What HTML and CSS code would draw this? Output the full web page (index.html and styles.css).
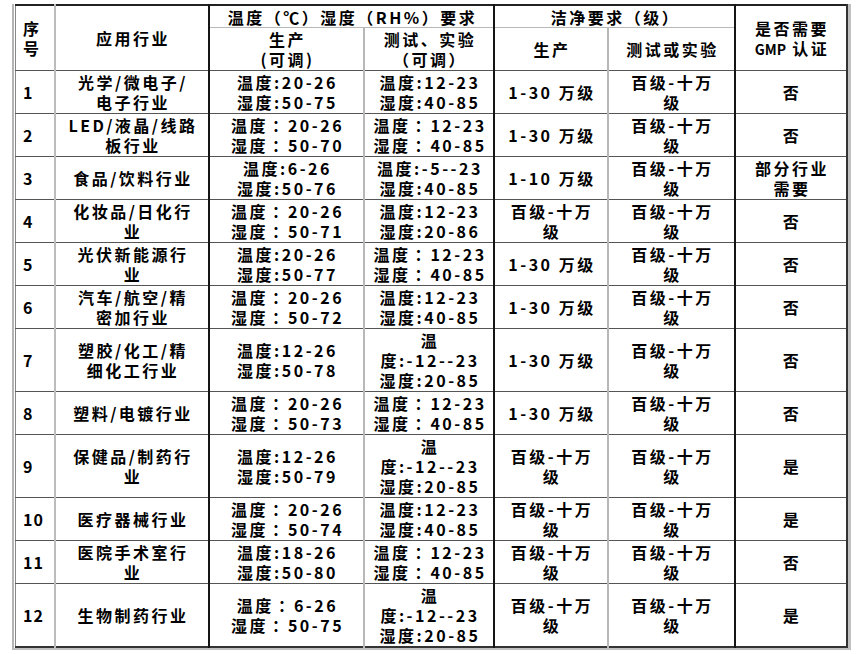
FILE: index.html
```html
<!DOCTYPE html>
<html lang="zh-CN">
<head>
<meta charset="utf-8">
<title>洁净室行业要求</title>
<link rel="stylesheet" href="styles.css">
</head>
<body>
<div class="frame">
<table class="spec">
<colgroup>
<col class="w1"><col class="w2"><col class="w3"><col class="w4"><col class="w5"><col class="w6"><col class="w7">
</colgroup>
<thead>
<tr class="h1">
<th class="c1 num" rowspan="2">序<br>号</th>
<th class="c2" rowspan="2">应用行业</th>
<th class="c4 sub" colspan="2">温度（℃）湿度（RH%）要求</th>
<th class="c6 sub" colspan="2">洁净要求（级）</th>
<th class="c7" rowspan="2">是否需要<br><span class="lat">GMP</span> 认证</th>
</tr>
<tr class="h2">
<th class="c3">生产<br>(可调)</th>
<th class="c4">测试、实验<br>（可调）</th>
<th class="c5">生产</th>
<th class="c6">测试或实验</th>
</tr>
</thead>
<tbody>
<tr><td class="c1 num">1</td><td class="c2">光学/微电子/<br>电子行业</td><td class="c3">温度:20-26<br>湿度:50-75</td><td class="c4">温度:12-23<br>湿度:40-85</td><td class="c5">1-30 万级</td><td class="c6">百级-十万<br>级</td><td class="c7">否</td></tr>
<tr><td class="c1 num">2</td><td class="c2">LED/液晶/线路<br>板行业</td><td class="c3">温度<span class="fc">：</span>20-26<br>湿度<span class="fc">：</span>50-70</td><td class="c4">温度<span class="fc">：</span>12-23<br>湿度<span class="fc">：</span>40-85</td><td class="c5">1-30 万级</td><td class="c6">百级-十万<br>级</td><td class="c7">否</td></tr>
<tr><td class="c1 num">3</td><td class="c2">食品/饮料行业</td><td class="c3">温度:6-26<br>湿度:50-76</td><td class="c4">温度:-5--23<br>湿度:40-85</td><td class="c5">1-10 万级</td><td class="c6">百级-十万<br>级</td><td class="c7">部分行业<br>需要</td></tr>
<tr><td class="c1 num">4</td><td class="c2">化妆品/日化行<br>业</td><td class="c3">温度<span class="fc">：</span>20-26<br>湿度<span class="fc">：</span>50-71</td><td class="c4">温度:12-23<br>湿度:20-86</td><td class="c5">百级-十万<br>级</td><td class="c6">百级-十万<br>级</td><td class="c7">否</td></tr>
<tr><td class="c1 num">5</td><td class="c2">光伏新能源行<br>业</td><td class="c3">温度:20-26<br>湿度:50-77</td><td class="c4">温度<span class="fc">：</span>12-23<br>湿度<span class="fc">：</span>40-85</td><td class="c5">1-30 万级</td><td class="c6">百级-十万<br>级</td><td class="c7">否</td></tr>
<tr><td class="c1 num">6</td><td class="c2">汽车/航空/精<br>密加行业</td><td class="c3">温度<span class="fc">：</span>20-26<br>湿度<span class="fc">：</span>50-72</td><td class="c4">温度:12-23<br>湿度:40-85</td><td class="c5">1-30 万级</td><td class="c6">百级-十万<br>级</td><td class="c7">否</td></tr>
<tr><td class="c1 num">7</td><td class="c2">塑胶/化工/精<br>细化工行业</td><td class="c3">温度:12-26<br>湿度:50-78</td><td class="c4">温<br>度:-12--23<br>湿度:20-85</td><td class="c5">1-30 万级</td><td class="c6">百级-十万<br>级</td><td class="c7">否</td></tr>
<tr><td class="c1 num">8</td><td class="c2">塑料/电镀行业</td><td class="c3">温度<span class="fc">：</span>20-26<br>湿度<span class="fc">：</span>50-73</td><td class="c4">温度<span class="fc">：</span>12-23<br>湿度<span class="fc">：</span>40-85</td><td class="c5">1-30 万级</td><td class="c6">百级-十万<br>级</td><td class="c7">否</td></tr>
<tr><td class="c1 num">9</td><td class="c2">保健品/制药行<br>业</td><td class="c3">温度:12-26<br>湿度:50-79</td><td class="c4">温<br>度:-12--23<br>湿度:20-85</td><td class="c5">百级-十万<br>级</td><td class="c6">百级-十万<br>级</td><td class="c7">是</td></tr>
<tr><td class="c1 num">10</td><td class="c2">医疗器械行业</td><td class="c3">温度<span class="fc">：</span>20-26<br>湿度<span class="fc">：</span>50-74</td><td class="c4">温度:12-23<br>湿度:40-85</td><td class="c5">百级-十万<br>级</td><td class="c6">百级-十万<br>级</td><td class="c7">是</td></tr>
<tr><td class="c1 num">11</td><td class="c2">医院手术室行<br>业</td><td class="c3">温度:18-26<br>湿度:50-80</td><td class="c4">温度<span class="fc">：</span>12-23<br>湿度<span class="fc">：</span>40-85</td><td class="c5">百级-十万<br>级</td><td class="c6">百级-十万<br>级</td><td class="c7">否</td></tr>
<tr><td class="c1 num">12</td><td class="c2">生物制药行业</td><td class="c3">温度<span class="fc">：</span>6-26<br>湿度<span class="fc">：</span>50-75</td><td class="c4">温<br>度:-12--23<br>湿度:20-85</td><td class="c5">百级-十万<br>级</td><td class="c6">百级-十万<br>级</td><td class="c7">是</td></tr>
</tbody>
</table>
</div>
</body>
</html>
```
FILE: styles.css
```css
html, body {
  margin: 0;
  padding: 0;
  background: #ffffff;
}
body {
  padding: 4px 0 0 12px;
  font-family: "Noto Sans CJK SC", "Noto Sans", sans-serif;
  color: #000;
}
.frame {
  display: inline-block;
  border-left: 2px solid #b4b4b4;
  border-right: 3px solid #c0c0c0;
  border-bottom: 2px solid #c0c0c0;
  padding-left: 1px;
}
.spec {
  border-collapse: collapse;
  table-layout: fixed;
  width: 832px;
  border-top: 2px solid #222;
  border-left: 1px solid #888;
  border-right: 2px solid #333;
  border-bottom: 2px solid #333;
  font-size: 16px;
  letter-spacing: 2.5px;
  line-height: 20px;
}
.w1 { width: 39px; }
.w2 { width: 154px; }
.w3 { width: 155px; }
.w4 { width: 130px; }
.w5 { width: 114px; }
.w6 { width: 127px; }
.w7 { width: 112px; }
.spec th,
.spec td {
  font-weight: bold;
  text-align: center;
  vertical-align: middle;
  padding: 1px 0 1px 3px;
  border-bottom: 1px solid #555;
  white-space: nowrap;
}
.spec .num {
  text-align: left;
  padding-left: 7px;
  letter-spacing: 1px;
}
.spec .sub {
  border-bottom: 1px solid #b8b8b8;
  height: 21px;
  padding-top: 0;
  padding-bottom: 0;
}
.spec .h2 th {
  height: 40px;
}
.fc {
  padding-left: 4px;
  letter-spacing: 0;
}
.lat {
  font-size: 14px;
  letter-spacing: 0;
}
.spec .c1 { border-right: 2px solid #bcbcbc; }
.spec .c2 { border-right: 2px solid #151515; }
.spec .c3 { border-right: 2px solid #b8b8b8; }
.spec .c4 { border-right: 2px solid #151515; }
.spec .c5 { border-right: 2px solid #b8b8b8; }
.spec .c6 { border-right: 2px solid #151515; }
```
